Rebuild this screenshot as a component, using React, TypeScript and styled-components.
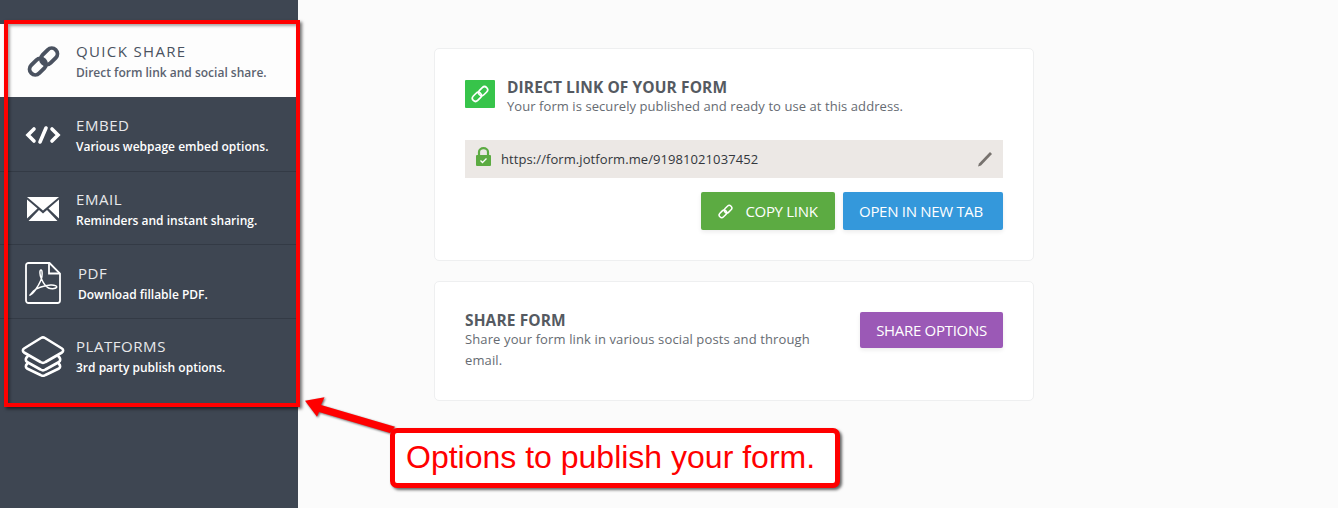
import React from "react";
import styled, { createGlobalStyle } from "styled-components";

const Global = createGlobalStyle`
  html, body { margin: 0; padding: 0; background: #fbfbfb; }
  * { box-sizing: border-box; }
  body { font-family: "Open Sans", "Noto Sans", sans-serif; }
`;

const Page = styled.div`
  position: relative;
  display: flex;
  width: 1338px;
  height: 508px;
  overflow: hidden;
  background: #fbfbfb;
`;
const Sidebar = styled.nav`
  width: 298px;
  flex: none;
  padding-top: 24px;
  background: #3e4652;
`;
const Item = styled.div<{ $active?: boolean; $last?: boolean; $height: number; $pad: number }>`
  display: flex;
  align-items: flex-start;
  height: ${(p) => p.$height}px;
  padding-top: ${(p) => p.$pad}px;
  background: ${(p) => (p.$active ? "#fdfdfd" : "transparent")};
  border-bottom: ${(p) => (p.$active || p.$last ? "none" : "1px solid #333a45")};
`;
const IconSlot = styled.div<{ $width: number; $offset: number }>`
  width: ${(p) => p.$width}px;
  flex: none;
  height: 40px;
  padding-left: ${(p) => p.$offset}px;
  display: flex;
  align-items: center;
  justify-content: center;
`;
const ItemText = styled.div``;
const ItemTitle = styled.div<{ $active?: boolean }>`
  font-size: 15px;
  line-height: 20px;
  letter-spacing: ${(p) => (p.$active ? "1.35px" : "0.55px")};
  font-weight: 400;
  color: ${(p) => (p.$active ? "#4a5260" : "#e8e9eb")};
`;
const ItemSub = styled.div<{ $active?: boolean }>`
  margin-top: 4px;
  font-size: 12px;
  line-height: 16px;
  font-weight: 600;
  color: ${(p) => (p.$active ? "#5b6370" : "#fff")};
`;
const Main = styled.main`
  flex: 1;
  padding: 48px 0 0 136px;
  display: flex;
  flex-direction: column;
  gap: 20px;
`;
const Card = styled.section<{ $height: number }>`
  width: 600px;
  height: ${(p) => p.$height}px;
  background: #fff;
  border: 1px solid #eeeff0;
  border-radius: 5px;
  padding: 0 30px;
`;
const LinkHead = styled.div`
  display: flex;
  gap: 12px;
  padding-top: 29px;
`;
const GreenTile = styled.div`
  width: 30px;
  height: 28px;
  margin-top: 2px;
  background: #37c44a;
  border-radius: 1px;
  display: flex;
  align-items: center;
  justify-content: center;
`;
const Heading = styled.div`
  font-size: 15.5px;
  line-height: 19px;
  font-weight: 700;
  letter-spacing: 0.1px;
  color: #555a61;
`;
const Desc = styled.div`
  font-size: 13px;
  line-height: 19px;
  letter-spacing: 0.07px;
  color: #666b72;
`;
const UrlBar = styled.div`
  margin-top: 24px;
  height: 38px;
  background: #ece8e5;
  display: flex;
  align-items: center;
  padding: 0 10px;
`;
const LockSlot = styled.div`
  display: flex;
  margin: -5px 0 0 1px;
`;
const UrlText = styled.div`
  margin-left: 10px;
  flex: 1;
  font-size: 13px;
  letter-spacing: 0.08px;
  color: #33373c;
`;
const ButtonRow = styled.div`
  margin-top: 14px;
  display: flex;
  justify-content: flex-end;
  gap: 8px;
`;
const Button = styled.button<{ $bg: string; $width: number; $height: number; $right?: number }>`
  width: ${(p) => p.$width}px;
  height: ${(p) => p.$height}px;
  border: 0;
  border-radius: 2px;
  padding: 0 ${(p) => p.$right ?? 0}px 0 0;
  background: ${(p) => p.$bg};
  color: #fff;
  font-family: inherit;
  font-size: 15px;
  letter-spacing: -0.3px;
  display: flex;
  align-items: center;
  justify-content: center;
  gap: 12px;
  box-shadow: 0 2px 4px rgba(0, 0, 0, 0.08);
`;
const ShareRow = styled.div`
  display: flex;
  justify-content: space-between;
  padding-top: 30px;
`;
const ShareText = styled.div`
  width: 360px;
  margin-top: -1px;
`;
const ShareDesc = styled(Desc)`
  line-height: 21px;
  margin-top: -1px;
  letter-spacing: 0.12px;
`;
const Highlight = styled.div`
  position: absolute;
  left: 4px;
  top: 20px;
  width: 296px;
  height: 387px;
  border: 4px solid #ff0000;
  box-shadow: 2px 2px 3px rgba(0, 0, 0, 0.55), inset 2px 2px 3px rgba(0, 0, 0, 0.35);
  pointer-events: none;
`;
const Arrow = styled.svg`
  position: absolute;
  left: 300px;
  top: 390px;
  overflow: visible;
  filter: drop-shadow(1px 1px 1px rgba(0, 0, 0, 0.6));
`;
const Callout = styled.div`
  position: absolute;
  left: 390px;
  top: 428px;
  width: 450px;
  height: 60px;
  background: #fff;
  border: 5px solid #ff0000;
  border-radius: 7px;
  box-shadow: 2px 2px 3px rgba(0, 0, 0, 0.6);
  display: flex;
  align-items: center;
  padding: 0 0 2px 11px;
  font-family: "Liberation Sans", Arial, sans-serif;
  font-size: 32px;
  color: #ff0000;
  white-space: nowrap;
`;

const Chain = ({ size, color, sw }: { size: number; color: string; sw: number }) => (
  <svg width={size} height={size} viewBox="0 0 32 32" fill="none" stroke={color} strokeWidth={sw}>
    <rect x="1.5" y="15.5" width="18" height="11" rx="5.5" transform="rotate(-45 10.5 21)" />
    <rect x="12.5" y="5.5" width="18" height="11" rx="5.5" transform="rotate(-45 21.5 11)" />
  </svg>
);
const Code = () => (
  <svg width="36" height="20" viewBox="0 0 36 20" fill="none" stroke="#fff" strokeWidth="3.6" strokeLinecap="round" strokeLinejoin="miter">
    <path d="M9 4 3 10l6 6" />
    <path d="M27 4l6 6-6 6" />
    <path d="M21 3 15 17" />
  </svg>
);
const Mail = () => (
  <svg width="32" height="24" viewBox="0 0 32 24" fill="#fff">
    <path d="M0 0h32L16 13.5z" />
    <path d="M0 2.5v19L10.5 11.5zM32 2.5v19L21.500 11.500z" />
    <path d="M1.500 24 12 13l4 3.500 4-3.500L30.500 24z" />
  </svg>
);
const Pdf = () => (
  <svg width="36" height="42" viewBox="0 0 36 42" fill="none" stroke="#fff">
    <path d="M3.500 1h21L35 11.500V38.500a2.500 2.500 0 0 1-2.500 2.500h-29A2.500 2.500 0 0 1 1 38.500v-35A2.500 2.500 0 0 1 3.500 1z" strokeWidth="1.800" />
    <path d="M24 1v10.500h11" strokeWidth="1.800" />
    <path d="M5 33c3-1 8-8 11-15 1.500-3.500 1.500-10 0-10s-1.500 5 .5 9c2 4.500 5 8 7 9s7 1 8-.5-2-2.800-6-2.500c-6 .5-14 3-17 6-2 2-4 5-3.500 4z" strokeWidth="1.500" strokeLinejoin="round" />
  </svg>
);
const Layers = () => (
  <svg width="44" height="41" viewBox="0 0 44 41" fill="none" stroke="#fff" strokeWidth="2.600" strokeLinejoin="round" strokeLinecap="round">
    <path d="M20 2 3 12.500c-1.500 1-1.500 3 0 4L19.500 26c1.500 1 3.500 1 5 0L41 16.500c1.500-1 1.500-3 0-4L24 2c-1.300-.8-2.700-.8-4 0z" />
    <path d="M6.500 20.500 5.500 21.500C4.500 23 4.500 25 6 26l13.500 7.500c1.500 1 3.500 1 5 0L38 26c1.500-1 1.500-3 .5-4.500l-1-1" />
    <path d="M6 28c-1.500 1.500-1.500 3.500 0 4.500l13.500 6.500c1.500 1 3.500 1 5 0L38 32.500c1.500-1 1.500-3 0-4.500" />
  </svg>
);
const Lock = () => (
  <svg width="15" height="19" viewBox="0 0 15 19">
    <path d="M3 9V5C3 2.800 5 1.200 7.500 1.200S12 2.800 12 5v4" fill="none" stroke="#5cab42" strokeWidth="2.200" />
    <rect x="0" y="8" width="15" height="11" rx="1" fill="#5cab42" />
    <path d="M4.500 13.500l2 2 4-4" fill="none" stroke="#fff" strokeWidth="1.300" />
  </svg>
);
const Pencil = () => (
  <svg width="16" height="16" viewBox="0 0 16 16">
    <path d="M13 1l2 2L4 14.500 1 15.500l1-3z" fill="#77726e" />
  </svg>
);

const items = [
  { title: "QUICK SHARE", sub: "Direct form link and social share.", active: true, height: 73, pad: 17, slot: 76, offset: 10, icon: <Chain size={33} color="#4a5260" sw={3.8} /> },
  { title: "EMBED", sub: "Various webpage embed options.", height: 75, pad: 18, slot: 76, offset: 10, icon: <Code /> },
  { title: "EMAIL", sub: "Reminders and instant sharing.", height: 73, pad: 17, slot: 76, offset: 10, icon: <Mail /> },
  { title: "PDF", sub: "Download fillable PDF.", height: 74, pad: 18, slot: 78, offset: 8, icon: <Pdf /> },
  { title: "PLATFORMS", sub: "3rd party publish options.", height: 73, pad: 17, slot: 76, offset: 10, last: true, icon: <Layers /> },
];

export default function App() {
  return (
    <Page>
      <Global />
      <Sidebar>
        {items.map((it) => (
          <Item key={it.title} $active={it.active} $last={it.last} $height={it.height} $pad={it.pad}>
            <IconSlot $width={it.slot} $offset={it.offset}>{it.icon}</IconSlot>
            <ItemText>
              <ItemTitle $active={it.active}>{it.title}</ItemTitle>
              <ItemSub $active={it.active}>{it.sub}</ItemSub>
            </ItemText>
          </Item>
        ))}
      </Sidebar>
      <Main>
        <Card $height={213}>
          <LinkHead>
            <GreenTile>
              <Chain size={18} color="#fff" sw={3} />
            </GreenTile>
            <div>
              <Heading>DIRECT LINK OF YOUR FORM</Heading>
              <Desc>Your form is securely published and ready to use at this address.</Desc>
            </div>
          </LinkHead>
          <UrlBar>
            <LockSlot><Lock /></LockSlot>
            <UrlText>https://form.jotform.me/91981021037452</UrlText>
            <Pencil />
          </UrlBar>
          <ButtonRow>
            <Button $bg="#5cab42" $width={134} $height={38}>
              <Chain size={15} color="#fff" sw={3.2} />
              <span>COPY LINK</span>
            </Button>
            <Button $bg="#3498db" $width={160} $height={38} $right={4}>OPEN IN NEW TAB</Button>
          </ButtonRow>
        </Card>
        <Card $height={120}>
          <ShareRow>
            <ShareText>
              <Heading>SHARE FORM</Heading>
              <ShareDesc>Share your form link in various social posts and through email.</ShareDesc>
            </ShareText>
            <Button $bg="#9b59b6" $width={143} $height={36}>SHARE OPTIONS</Button>
          </ShareRow>
        </Card>
      </Main>
      <Highlight />
      <Arrow width="110" height="70" viewBox="0 0 110 70">
        <path d="M5 10.700 24.500 7.300 21 15 95 36.700 90 43 19 22 17 26.700z" fill="#ff0000" />
      </Arrow>
      <Callout>Options to publish your form.</Callout>
    </Page>
  );
}
